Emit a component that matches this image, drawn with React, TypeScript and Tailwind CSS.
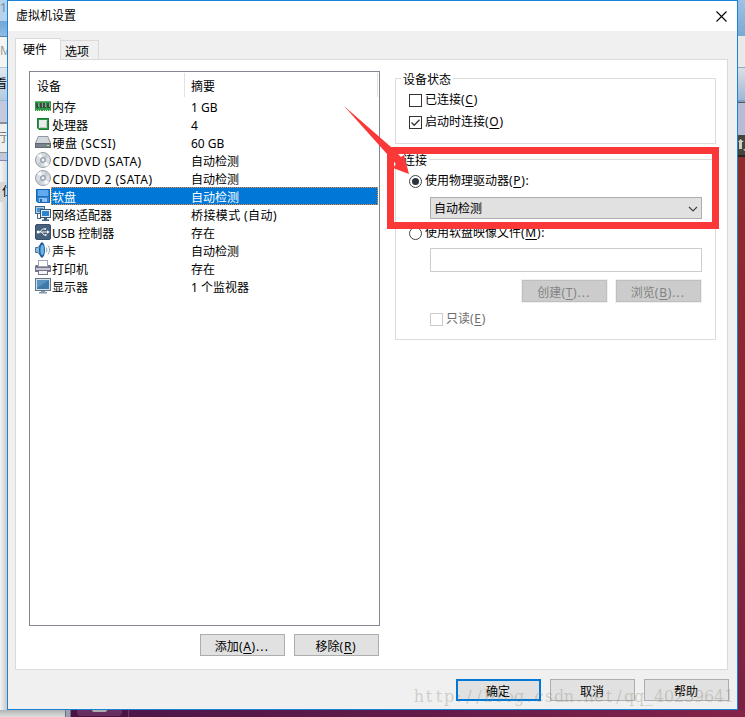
import type { ReactNode } from "react";
import clsx from "clsx";

function MemoryIcon() {
  return (
    <svg width="16" height="16" viewBox="0 0 16 16" shapeRendering="crispEdges">
      <rect x="0" y="3" width="16" height="10" fill="#2f9a4c" />
      <rect x="0" y="3" width="16" height="1" fill="#5fb96d" />
      <path d="M1 5h3v5H1zM5 5h2v5H5zM8 5h3v5H8zM12 5h3v5h-3z" fill="#3b4a40" />
      <path d="M3 5h1v4H3zM7 5h1v4H7zM10 5h1v4h-1zM14 5h1v4h-1z" fill="#83a88b" />
      <path d="M1 12h1v1H1zM3 12h1v1H3zM5 12h1v1H5zM8 12h1v1H8zM10 12h1v1h-1zM12 12h1v1h-1zM14 12h1v1h-1z" fill="#d9ecb0" />
    </svg>
  );
}

function CpuIcon() {
  return (
    <svg width="16" height="16" viewBox="0 0 16 16">
      <path d="M2 2h12v12H4l-2-2z" fill="#2c9547" />
      <path d="M2.5 2.5h11v11h-9l-2-2z" fill="none" stroke="#1e7a37" />
      <rect x="4" y="4" width="8" height="8" fill="#e9eceb" />
      <path d="M5 11.500h6.500V5" fill="none" stroke="#bfc8c3" />
    </svg>
  );
}

function DiskIcon() {
  return (
    <svg width="16" height="16" viewBox="0 0 16 16">
      <path d="M3 2h10l3 7v5H0V9z" fill="#9099a3" />
      <path d="M3.5 3h9l2.3 6H1.2z" fill="#d2d7dc" />
      <rect x="0.5" y="9.5" width="15" height="4" fill="#79838e" stroke="#5f6973" />
      <rect x="12" y="11" width="2" height="1" fill="#b9e8a8" />
    </svg>
  );
}

function DiscIcon() {
  return (
    <svg width="16" height="16" viewBox="0 0 16 16">
      <circle cx="8" cy="8" r="7.5" fill="#dadde2" stroke="#8b929c" strokeWidth="0.9" />
      <path d="M8 8L2 3.8A7 7 0 0 1 6 1.2zM8 8l6 4.2a7 7 0 0 1-4 2.6z" fill="#f8f9fb" />
      <path d="M8 8l2.5-6.6A7 7 0 0 1 14 4.5zM8 8l-2.5 6.6A7 7 0 0 1 2 11.5z" fill="#c6cbd4" />
      <circle cx="8" cy="8" r="2.6" fill="#b9c0cb" stroke="#858d99" strokeWidth="0.7" />
      <circle cx="8" cy="8" r="1.1" fill="#fff" />
    </svg>
  );
}

function FloppyIcon() {
  return (
    <svg width="16" height="16" viewBox="0 0 16 16">
      <path d="M1 1h14v14H3l-2-2z" fill="#3287d5" />
      <path d="M1.5 1.5h13v13H3.2l-1.7-1.7z" fill="none" stroke="#1864b0" />
      <rect x="3" y="2" width="10" height="6" fill="#62aaf0" />
      <rect x="2" y="8" width="12" height="1" fill="#2270bd" />
      <rect x="4" y="10" width="8" height="4" fill="#8fc2f2" />
      <rect x="5" y="11" width="2" height="3" fill="#236bb0" />
    </svg>
  );
}

function NetworkIcon() {
  return (
    <svg width="16" height="16" viewBox="0 0 16 16">
      <rect x="0.5" y="0.5" width="9" height="7" fill="#a9cff0" stroke="#46637f" />
      <rect x="2" y="2" width="6" height="4" fill="#4b94d4" />
      <path d="M2.5 8v4.5H6" fill="none" stroke="#3d5f7c" />
      <rect x="5.5" y="3.5" width="10" height="8" fill="#e5edf4" stroke="#37556f" />
      <rect x="7" y="5" width="7" height="5" fill="#2c83cf" />
      <path d="M9 12h3v1.5h2V15H7v-1.5h2z" fill="#47647d" />
    </svg>
  );
}

function UsbIcon() {
  return (
    <svg width="16" height="16" viewBox="0 0 16 16">
      <rect x="0.5" y="0.5" width="15" height="15" rx="1.5" fill="#47617c" stroke="#36506b" />
      <path d="M3 8h10M5 8l2.500-3H10M6.500 8L9 11h1.500" fill="none" stroke="#fff" strokeWidth="0.9" />
      <circle cx="3.2" cy="8" r="1.5" fill="#fff" />
      <path d="M12 6.300l2.700 1.700L12 9.700zM9.500 4.200h1.600v1.600H9.500zM10 10.200h1.600v1.600H10z" fill="#fff" />
    </svg>
  );
}

function SoundIcon() {
  return (
    <svg width="16" height="16" viewBox="0 0 16 16">
      <path d="M0.500 5.500h2.500L7 0.500v15L3 10.500H0.500z" fill="#8db6d8" stroke="#2c5c8a" strokeWidth="0.8" />
      <ellipse cx="7" cy="8" rx="3" ry="7.4" fill="#1f5b94" />
      <ellipse cx="7.200" cy="8" rx="1.800" ry="5.200" fill="#68b3ea" />
      <path d="M11.200 5.500q1.800 2.500 0 5M13 3.500q3.200 4.500 0 9" fill="none" stroke="#91a9bf" />
    </svg>
  );
}

function PrinterIcon() {
  return (
    <svg width="16" height="16" viewBox="0 0 16 16">
      <rect x="3.5" y="0.5" width="9" height="6" fill="#fff" stroke="#a2a2b5" />
      <path d="M1 5h2v2h10V5h2l1 1v6H0V6z" fill="#74748b" />
      <rect x="1" y="8" width="14" height="2" fill="#c7c7d5" />
      <rect x="3.5" y="10.5" width="9" height="4" fill="#f4f4f9" stroke="#75758a" />
    </svg>
  );
}

function DisplayIcon() {
  return (
    <svg width="16" height="16" viewBox="0 0 16 16">
      <rect x="0.5" y="0.5" width="15" height="12" fill="#d7e0e8" stroke="#5f778c" />
      <rect x="2" y="2" width="12" height="9" fill="#3f79aa" />
      <path d="M2 2h12L2 10z" fill="#5b93c0" />
      <path d="M6 13h4v1h2v1.500H4V14h2z" fill="#8798a7" />
    </svg>
  );
}

const devices: { icon: ReactNode; name: string; summary: string; wide?: boolean }[] = [
  { icon: <MemoryIcon />, name: "内存", summary: "1 GB" },
  { icon: <CpuIcon />, name: "处理器", summary: "4" },
  { icon: <DiskIcon />, name: "硬盘 (SCSI)", summary: "60 GB", wide: true },
  { icon: <DiscIcon />, name: "CD/DVD (SATA)", summary: "自动检测", wide: true },
  { icon: <DiscIcon />, name: "CD/DVD 2 (SATA)", summary: "自动检测", wide: true },
  { icon: <FloppyIcon />, name: "软盘", summary: "自动检测" },
  { icon: <NetworkIcon />, name: "网络适配器", summary: "桥接模式 (自动)" },
  { icon: <UsbIcon />, name: "USB 控制器", summary: "存在" },
  { icon: <SoundIcon />, name: "声卡", summary: "自动检测" },
  { icon: <PrinterIcon />, name: "打印机", summary: "存在" },
  { icon: <DisplayIcon />, name: "显示器", summary: "1 个监视器" },
];

const SELECTED = 5;

// Label with its keyboard mnemonic, e.g. 添加(A)...
function Label({ text, hotkey, suffix }: { text: string; hotkey: string; suffix?: string }) {
  return (
    <span className="whitespace-nowrap">
      {text}
      <span className="tracking-[0.7px]">
        (<u className="underline-offset-2">{hotkey}</u>)
      </span>
      <span className="tracking-[1.2px]">{suffix}</span>
    </span>
  );
}

function Button({ children, primary, disabled }: { children: ReactNode; primary?: boolean; disabled?: boolean }) {
  return (
    <button
      className={clsx(
        "flex h-[22px] w-[85px] items-center justify-center pt-[3px] pr-px",
        primary ? "border-2 border-[#0078d7]" : disabled ? "border border-[#bfbfbf]" : "border border-[#adadad]",
        disabled ? "bg-[#cccccc] text-[#838383] outline outline-[#f0f0f0]" : "bg-[#e1e1e1]",
      )}
    >
      {children}
    </button>
  );
}

function Checkbox({ checked, disabled }: { checked?: boolean; disabled?: boolean }) {
  return (
    <span className={clsx("h-[13px] w-[13px] shrink-0 border bg-white", disabled ? "border-[#cccccc]" : "border-[#333333]")}>
      {checked && (
        <svg width="11" height="11" viewBox="0 0 11 11">
          <path d="M1.500 5.500l2.700 2.700L9.500 2.700" fill="none" stroke="#333" strokeWidth="1.300" />
        </svg>
      )}
    </span>
  );
}

function Radio({ checked }: { checked?: boolean }) {
  return (
    <span className="flex h-[13px] w-[13px] shrink-0 items-center justify-center rounded-full border border-[#444] bg-white">
      {checked && <span className="h-[7px] w-[7px] rounded-full bg-[#2b333b]" />}
    </span>
  );
}

function LeftEdge() {
  return (
    <div className="flex h-[710px] w-[7px] flex-col overflow-hidden text-xs">
      <div className="h-[21px] bg-[#b5d2ee] leading-4 text-[#7b8794]">1</div>
      <div className="h-[16px] border-b border-[#6b7f95] bg-linear-to-b from-[#72a6d5] to-[#8fbce4]" />
      <div className="h-[31px] border-b border-[#b0c4d8] bg-[#f4f4f4] leading-7 text-[#9b9b9b]">M</div>
      <div className="flex h-[33px] justify-end border-b border-[#9bb9d6] bg-linear-to-b from-[#e4e9ef] to-[#b1c9e0] leading-8">看</div>
      <div className="h-[23px] border-b-2 border-[#8d8d97] bg-[#c5c9dd]" />
      <div className="flex h-[29px] justify-end border-b border-[#8f8f8f] bg-[#eeeeee] leading-7 text-[#777]">行</div>
      <div className="h-[8px] border-b border-[#8888a0] bg-[#c3c7da]" />
      <div className="h-[21px] bg-linear-to-r from-[#f5f5f5] to-[#d8d8d8]" />
      <div className="h-[20px] bg-[#d7d7d7] pl-[2px] leading-5">位</div>
      <div className="flex-1 bg-linear-to-r from-[#f3f3f3] to-[#c9c9c9]" />
    </div>
  );
}

function RightEdge() {
  return (
    <div className="flex h-[710px] w-[7px] flex-col overflow-hidden">
      <div className="h-[36px] bg-linear-to-b from-[#9dc3e6] to-[#79a9d4]" />
      <div className="h-[31px] bg-[#e9e9e9]" />
      <div className="h-[35px] border-t border-b-2 border-t-[#8fa8c4] border-b-[#819fc2] bg-linear-to-b from-[#dadfe5] to-[#9db8d8]" />
      <div className="h-[33px] border-t border-[#555] bg-[#b7bbd5]" />
      <div className="h-[22px] border-b-2 border-[#26221e] bg-[#46433d]">
        <svg width="7" height="20" viewBox="0 0 7 20">
          <path d="M0 7l2.500-3L6 7H4v7H1V7zM5 14h2v2z" fill="#d0cec8" />
        </svg>
      </div>
      <div className="flex-1 bg-linear-to-b from-[#8e2b2d] via-[#8b2533] to-[#792044]" />
    </div>
  );
}

function BottomEdge() {
  return (
    <div className="col-span-3 flex h-[7px]">
      <div className="w-[65px] bg-linear-to-b from-[#b3b3b3] to-[#dedede]" />
      <div className="w-[6px] border-x border-[#6d6d79] bg-[#9ba0b5]" />
      <div className="flex w-[58px] justify-center border-r border-[#6e3965] bg-[#4b1244]">
        <div className="flex h-[6px] w-[45px] justify-center rounded-b-sm bg-[#672f60]">
          <div className="h-[2px] w-[15px] rounded-b-full bg-[#a9b0ac]" />
        </div>
      </div>
      <div className="flex-1 bg-linear-to-r from-[#4d1548] via-[#641b49] to-[#852348]" />
    </div>
  );
}

function DeviceList() {
  return (
    <div className="h-[555px] w-[351px] border border-[#828790] bg-white">
      <div className="flex h-[25px] pt-px leading-[28px]">
        <div className="w-[155px] border-r border-[#e2e2e2] pl-[7px]">设备</div>
        <div className="w-[193px] border-r border-[#e2e2e2] pl-[6px]">摘要</div>
      </div>
      {devices.map((device, i) => (
        <div key={i} className="flex h-[18px] pl-[5px] leading-[21px]">
          <div className="w-[16px] pt-px">{device.icon}</div>
          <div
            className={clsx(
              "flex w-[327px]",
              i === SELECTED && "bg-[#0078d7] text-white outline-1 -outline-offset-1 outline-dotted outline-[#ff8728]",
            )}
          >
            <span className={clsx("w-[140px]", device.wide ? "pl-[1.5px] tracking-[0.5px]" : "pl-px")}>{device.name}</span>
            <span className={clsx(i === 6 && "tracking-[0.4px]")}>{device.summary}</span>
          </div>
        </div>
      ))}
    </div>
  );
}

function Options() {
  return (
    <div className="-mt-px w-[321px]">
      <fieldset className="h-[74px] border border-[#dcdcdc] pl-[13px]">
        <legend className="-ml-[8px] h-[16px] px-[2px] leading-[19px]">设备状态</legend>
        <div className="mt-[3px] flex h-[22px] items-center gap-[3px]">
          <Checkbox />
          <Label text="已连接" hotkey="C" />
        </div>
        <div className="flex h-[22px] items-center gap-[3px]">
          <Checkbox checked />
          <Label text="启动时连接" hotkey="O" />
        </div>
      </fieldset>
      <fieldset className="mt-[7px] h-[189px] border border-[#dcdcdc] pl-[13px]">
        <legend className="-ml-[8px] h-[16px] px-[2px] leading-[19px]">连接</legend>
        <div className="mt-[5px] flex h-[18px] items-center gap-[3px]">
          <Radio checked />
          <Label text="使用物理驱动器" hotkey="P" suffix=":" />
        </div>
        <div className="mt-[7px] ml-[21px] flex h-[22px] w-[272px] items-center justify-between border border-[#adadad] bg-[#e1e1e1] pt-[2px] pr-[3px] pl-[3px]">
          自动检测
          <svg width="10" height="6" viewBox="0 0 10 6">
            <path d="M1 1l4 4 4-4" fill="none" stroke="#444" strokeWidth="1.200" />
          </svg>
        </div>
        <div className="mt-[5px] flex h-[18px] items-center gap-[3px]">
          <Radio />
          <Label text="使用软盘映像文件" hotkey="M" suffix=":" />
        </div>
        <div className="mt-[6px] ml-[21px] h-[24px] w-[272px] border border-[#cccccc] bg-white" />
        <div className="mt-[8px] ml-[113px] flex gap-[9px]">
          <Button disabled>
            <Label text="创建" hotkey="T" suffix="..." />
          </Button>
          <Button disabled>
            <Label text="浏览" hotkey="B" suffix="..." />
          </Button>
        </div>
        <div className="mt-[8px] ml-[21px] flex h-[18px] items-center gap-[3px] text-[#6d6d6d]">
          <Checkbox disabled />
          <Label text="只读" hotkey="E" />
        </div>
      </fieldset>
    </div>
  );
}

function Watermark() {
  return (
    <div className="pointer-events-none absolute top-[686px] left-[414px] flex font-['DejaVu_Serif',serif] text-[16px] leading-[22px] text-[#8c8c7c]/35">
      {"http://blog.csdn.net/qq_40259641".split("").map((ch, i) => (
        <span key={i} className="flex w-[10px] justify-center">
          {ch}
        </span>
      ))}
    </div>
  );
}

export default function App() {
  return (
    <div className="relative grid h-[717px] w-[745px] grid-cols-[7px_731px_7px] grid-rows-[710px_7px] overflow-hidden font-['Noto_Sans','Noto_Sans_CJK_SC',sans-serif] text-xs text-black">
      <LeftEdge />
      <div className="flex flex-col border border-[#1883d7] bg-[#f0f0f0]">
        <div className="flex h-[30px] items-center justify-between bg-white pr-[10px] pl-[8px]">
          虚拟机设置
          <svg width="11" height="11" viewBox="0 0 11 11">
            <path d="M0.500 0.500l10 10M10.500 0.500l-10 10" stroke="#000" strokeWidth="1.100" />
          </svg>
        </div>
        <div className="mt-[7px] ml-[7px] flex h-[21px] items-end">
          <div className="z-10 -mb-px h-[22px] w-[46px] border border-b-0 border-[#dadada] bg-white pl-[7px] leading-[22px]">硬件</div>
          <div className="-ml-px h-[19px] w-[39px] border border-b-0 border-[#dadada] pl-[4px] leading-[21px]">选项</div>
        </div>
        <div className="ml-[7px] flex h-[611px] w-[713px] gap-[15px] border border-[#dadada] bg-white pt-[11px] pl-[13px]">
          <div>
            <DeviceList />
            <div className="mt-[8px] flex justify-end gap-[9px] pr-px">
              <Button>
                <Label text="添加" hotkey="A" suffix="..." />
              </Button>
              <Button>
                <Label text="移除" hotkey="R" />
              </Button>
            </div>
          </div>
          <Options />
        </div>
        <div className="mt-[9px] flex justify-end gap-[9px] pr-[8px]">
          <Button primary>确定</Button>
          <Button>取消</Button>
          <Button>帮助</Button>
        </div>
      </div>
      <RightEdge />
      <BottomEdge />
      {/* callout around the physical drive option */}
      <div className="absolute top-[147px] left-[387px] h-[82px] w-[332px] border-7 border-[#fb3838]" />
      <svg className="absolute top-[100px] left-[340px]" width="75" height="80" viewBox="340 100 75 80">
        <path d="M344 106L391 147L401 157L404 155L409 174L393 168L396 164L387 154Z" fill="#fb3838" />
      </svg>
      <Watermark />
    </div>
  );
}
